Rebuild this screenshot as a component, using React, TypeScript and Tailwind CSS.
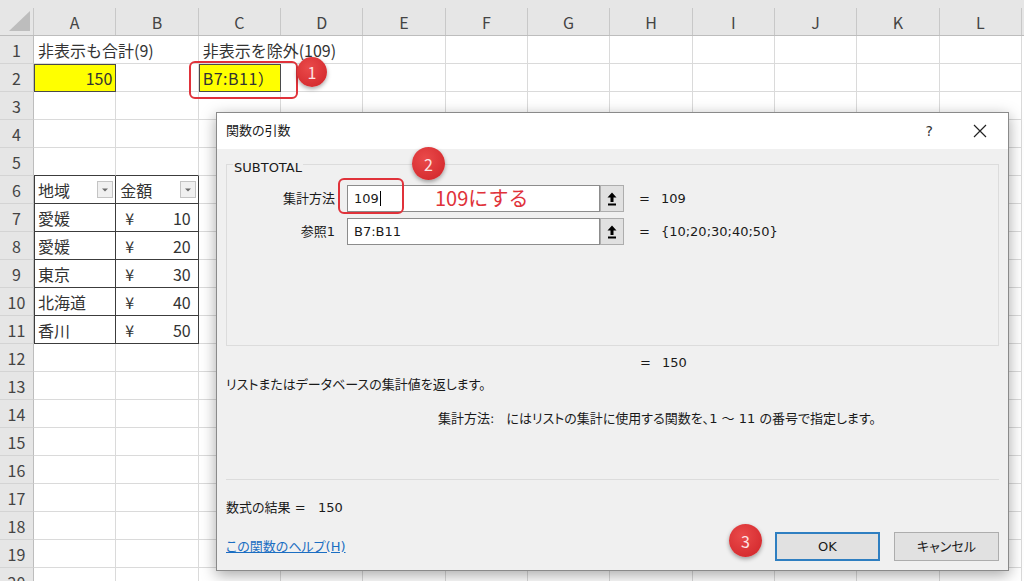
const COLS = ['A', 'B', 'C', 'D', 'E', 'F', 'G', 'H', 'I', 'J', 'K', 'L'];
const ROWS = Array.from({ length: 20 }, (_, i) => i + 1);

const regions: Record<number, [string, number]> = {
  7: ['愛媛', 10],
  8: ['愛媛', 20],
  9: ['東京', 30],
  10: ['北海道', 40],
  11: ['香川', 50],
};

const FilterButton = () => (
  <span className="ml-auto mr-[2px] flex h-[17px] w-[16px] items-center justify-center border border-[#c4c4c4] bg-[#f0f0f0]">
    <svg width="6" height="4" viewBox="0 0 6 4">
      <path d="M0 0.5h6L3 3.5z" fill="#6a6a6a" />
    </svg>
  </span>
);

const Cell = ({ row, col }: { row: number; col: number }) => {
  const inTable = row >= 6 && row <= 11 && col <= 1;
  const base = 'h-[28px] border-r border-b text-[16px] text-[#333] flex items-center whitespace-nowrap';
  let cls = `${base} border-[#dadada]`;

  if (inTable) cls = `${base} border-[#3c3c3c]`;
  if (row === 5 && col <= 1) cls = `${base} border-r-[#dadada] border-b-[#3c3c3c]`;
  if (inTable && col === 0) cls += ' shadow-[inset_1px_0_0_#3c3c3c]';

  if (row === 2 && col === 0)
    return (
      <div className={`${base} border-[#4a4a4a] bg-[#ffff00] justify-end pr-[3px] shadow-[inset_1px_1px_0_#4a4a4a]`}>150</div>
    );
  if (row === 2 && col === 2)
    return (
      <div className={`${base} border-[#4a4a4a] bg-[#ffff00] pl-[4px] tracking-[0.5px] shadow-[inset_1px_1px_0_#4a4a4a]`}>B7:B11）</div>
    );
  if (row === 6 && col === 0)
    return (
      <div className={`${cls} pl-[4px]`}>
        地域
        <FilterButton />
      </div>
    );
  if (row === 6 && col === 1)
    return (
      <div className={`${cls} pl-[4px]`}>
        金額
        <FilterButton />
      </div>
    );
  if (regions[row] && col === 0) return <div className={`${cls} pl-[4px]`}>{regions[row][0]}</div>;
  if (regions[row] && col === 1)
    return (
      <div className={`${cls} pl-[9px] pr-[7px] justify-between`}>
        <span>¥</span>
        <span>{regions[row][1]}</span>
      </div>
    );
  return <div className={cls} />;
};

const UpButton = () => (
  <div className="flex h-[27px] w-[24px] items-center justify-center border border-[#adadad] bg-[#e1e1e1]">
    <svg width="10" height="14" viewBox="0 0 10 14">
      <path d="M5 0.5L9.5 5.5H6.5V10H3.5V5.5H0.5z" fill="#000" />
      <rect x="1" y="11.5" width="8" height="2" fill="#000" />
    </svg>
  </div>
);

const Badge = ({ n, className }: { n: number; className: string }) => (
  <div
    className={`absolute flex items-center justify-center rounded-full bg-[radial-gradient(circle_at_40%_35%,#ea4a4a,#cf2328)] text-[16px] text-[#fde3e3] shadow-[0_2px_4px_rgba(0,0,0,0.35)] ${className}`}
  >
    {n}
  </div>
);

const Dialog = () => (
  <div className="absolute left-[216px] top-[112px] flex w-[793px] flex-col border border-[#8a8a8a] bg-[#f0f0f0] font-['DejaVu_Sans','Noto_Sans_CJK_JP',sans-serif] text-[13px] text-[#1a1a1a] shadow-[0_4px_14px_rgba(0,0,0,0.35)] [font-feature-settings:'palt']">
    <div className="flex h-[36px] items-center justify-between bg-white pl-[9px] pr-[21px]">
      <span>関数の引数</span>
      <div className="flex items-center gap-[40px]">
        <span className="text-[14px] text-[#333]">?</span>
        <svg width="14" height="14" viewBox="0 0 14 14">
          <path d="M1 1L13 13M13 1L1 13" stroke="#222" strokeWidth="1.2" />
        </svg>
      </div>
    </div>

    <div className="flex flex-col px-[9px] pb-[9px] pt-[15px]">
      <div className="relative h-[182px] border border-[#dcdcdc] pt-[20px]">
        <span className="absolute left-[6px] top-[-5px] bg-[#f0f0f0] px-[1px] leading-[16px]">SUBTOTAL</span>
        <div className="flex items-center">
          <span className="w-[108px] text-right">集計方法</span>
          <div className="ml-[12px] flex h-[27px] w-[253px] items-center border border-[#8c8c8c] bg-white pl-[6px]">
            109
            <span className="ml-[1px] h-[15px] w-px bg-black" />
          </div>
          <UpButton />
          <span className="ml-[15px]">=</span>
          <span className="ml-[11px]">109</span>
        </div>
        <div className="mt-[6px] flex items-center">
          <span className="w-[108px] text-right">参照1</span>
          <div className="ml-[12px] flex h-[27px] w-[253px] items-center border border-[#8c8c8c] bg-white pl-[6px]">
            B7:B11
          </div>
          <UpButton />
          <span className="ml-[15px]">=</span>
          <span className="ml-[11px]">{'{10;20;30;40;50}'}</span>
        </div>
      </div>

      <div className="mt-[8px] flex pl-[414px] leading-[18px]">
        <span>=</span>
        <span className="ml-[11px]">150</span>
      </div>
      <div className="mt-[4px] leading-[18px]">リストまたはデータベースの集計値を返します。</div>
      <div className="mt-[16px] flex pl-[212px] leading-[18px]">
        <span>集計方法:</span>
        <span className="ml-[12px]">にはリストの集計に使用する関数を、1 ～ 11 の番号で指定します。</span>
      </div>
      <div className="mt-[51px] h-px bg-[#dcdcdc]" />
      <div className="mt-[19px] leading-[18px]">数式の結果 =&nbsp;&nbsp; 150</div>
      <div className="mt-[15px] flex items-center">
        <span className="text-[#1b6ec2] underline">この関数のヘルプ(H)</span>
        <div className="ml-auto flex h-[29px] w-[105px] items-center justify-center border-2 border-[#2f7fc1] bg-[#e1e1e1]">
          OK
        </div>
        <div className="ml-[14px] flex h-[29px] w-[105px] items-center justify-center border border-[#adadad] bg-[#e1e1e1]">
          キャンセル
        </div>
      </div>
    </div>
  </div>
);

export default function App() {
  return (
    <div className="relative h-[581px] w-[1024px] overflow-hidden bg-white font-['Noto_Sans_CJK_JP',sans-serif]">
      <div className="flex flex-col">
        <div className="h-[8px] bg-[#e6e6e6]" />
        <div className="grid h-[28px] grid-cols-[34px_repeat(12,82.33px)] border-b border-[#bdbdbd] bg-[#e6e6e6] text-[16px] text-[#444]">
          <div className="relative border-r border-[#c8c8c8]">
            <svg className="absolute bottom-[4px] right-[3px]" width="21" height="20" viewBox="0 0 21 20">
              <path d="M21 0V20H0z" fill="#bdbdbd" />
            </svg>
          </div>
          {COLS.map((c) => (
            <div key={c} className="flex items-center justify-center border-r border-[#c8c8c8]">
              {c}
            </div>
          ))}
        </div>

        {ROWS.map((r) => (
          <div key={r} className="grid grid-cols-[34px_repeat(12,82.33px)]">
            <div className="flex h-[28px] items-center justify-center border-b border-r border-b-[#d4d4d4] border-r-[#bdbdbd] bg-[#e6e6e6] text-[16px] text-[#444]">
              {r}
            </div>
            {r === 1 ? (
              <>
                <div className="col-span-2 flex h-[28px] items-center border-b border-r border-[#dadada] pl-[4px] text-[16px] text-[#333] whitespace-nowrap">
                  非表示も合計(9)
                </div>
                <div className="col-span-2 flex h-[28px] items-center border-b border-r border-[#dadada] pl-[4px] text-[16px] text-[#333] whitespace-nowrap">
                  非表示を除外(109)
                </div>
                {COLS.slice(4).map((c) => (
                  <div key={c} className="h-[28px] border-b border-r border-[#dadada]" />
                ))}
              </>
            ) : (
              COLS.map((c, i) => <Cell key={c} row={r} col={i} />)
            )}
          </div>
        ))}
      </div>

      <Dialog />

      <div className="absolute left-[189px] top-[61px] h-[38px] w-[109px] rounded-[6px] border-2 border-[#e0323a]" />
      <Badge n={1} className="left-[297px] top-[57px] h-[30px] w-[30px]" />

      <div className="absolute left-[338px] top-[178px] h-[36px] w-[66px] rounded-[6px] border-2 border-[#e0323a]" />
      <Badge n={2} className="left-[412px] top-[147px] h-[33px] w-[33px]" />
      <div className="absolute left-[435px] top-[184px] text-[20px] leading-[28px] text-[#e0323a]">109にする</div>

      <Badge n={3} className="left-[729px] top-[524px] h-[33px] w-[33px]" />
    </div>
  );
}
